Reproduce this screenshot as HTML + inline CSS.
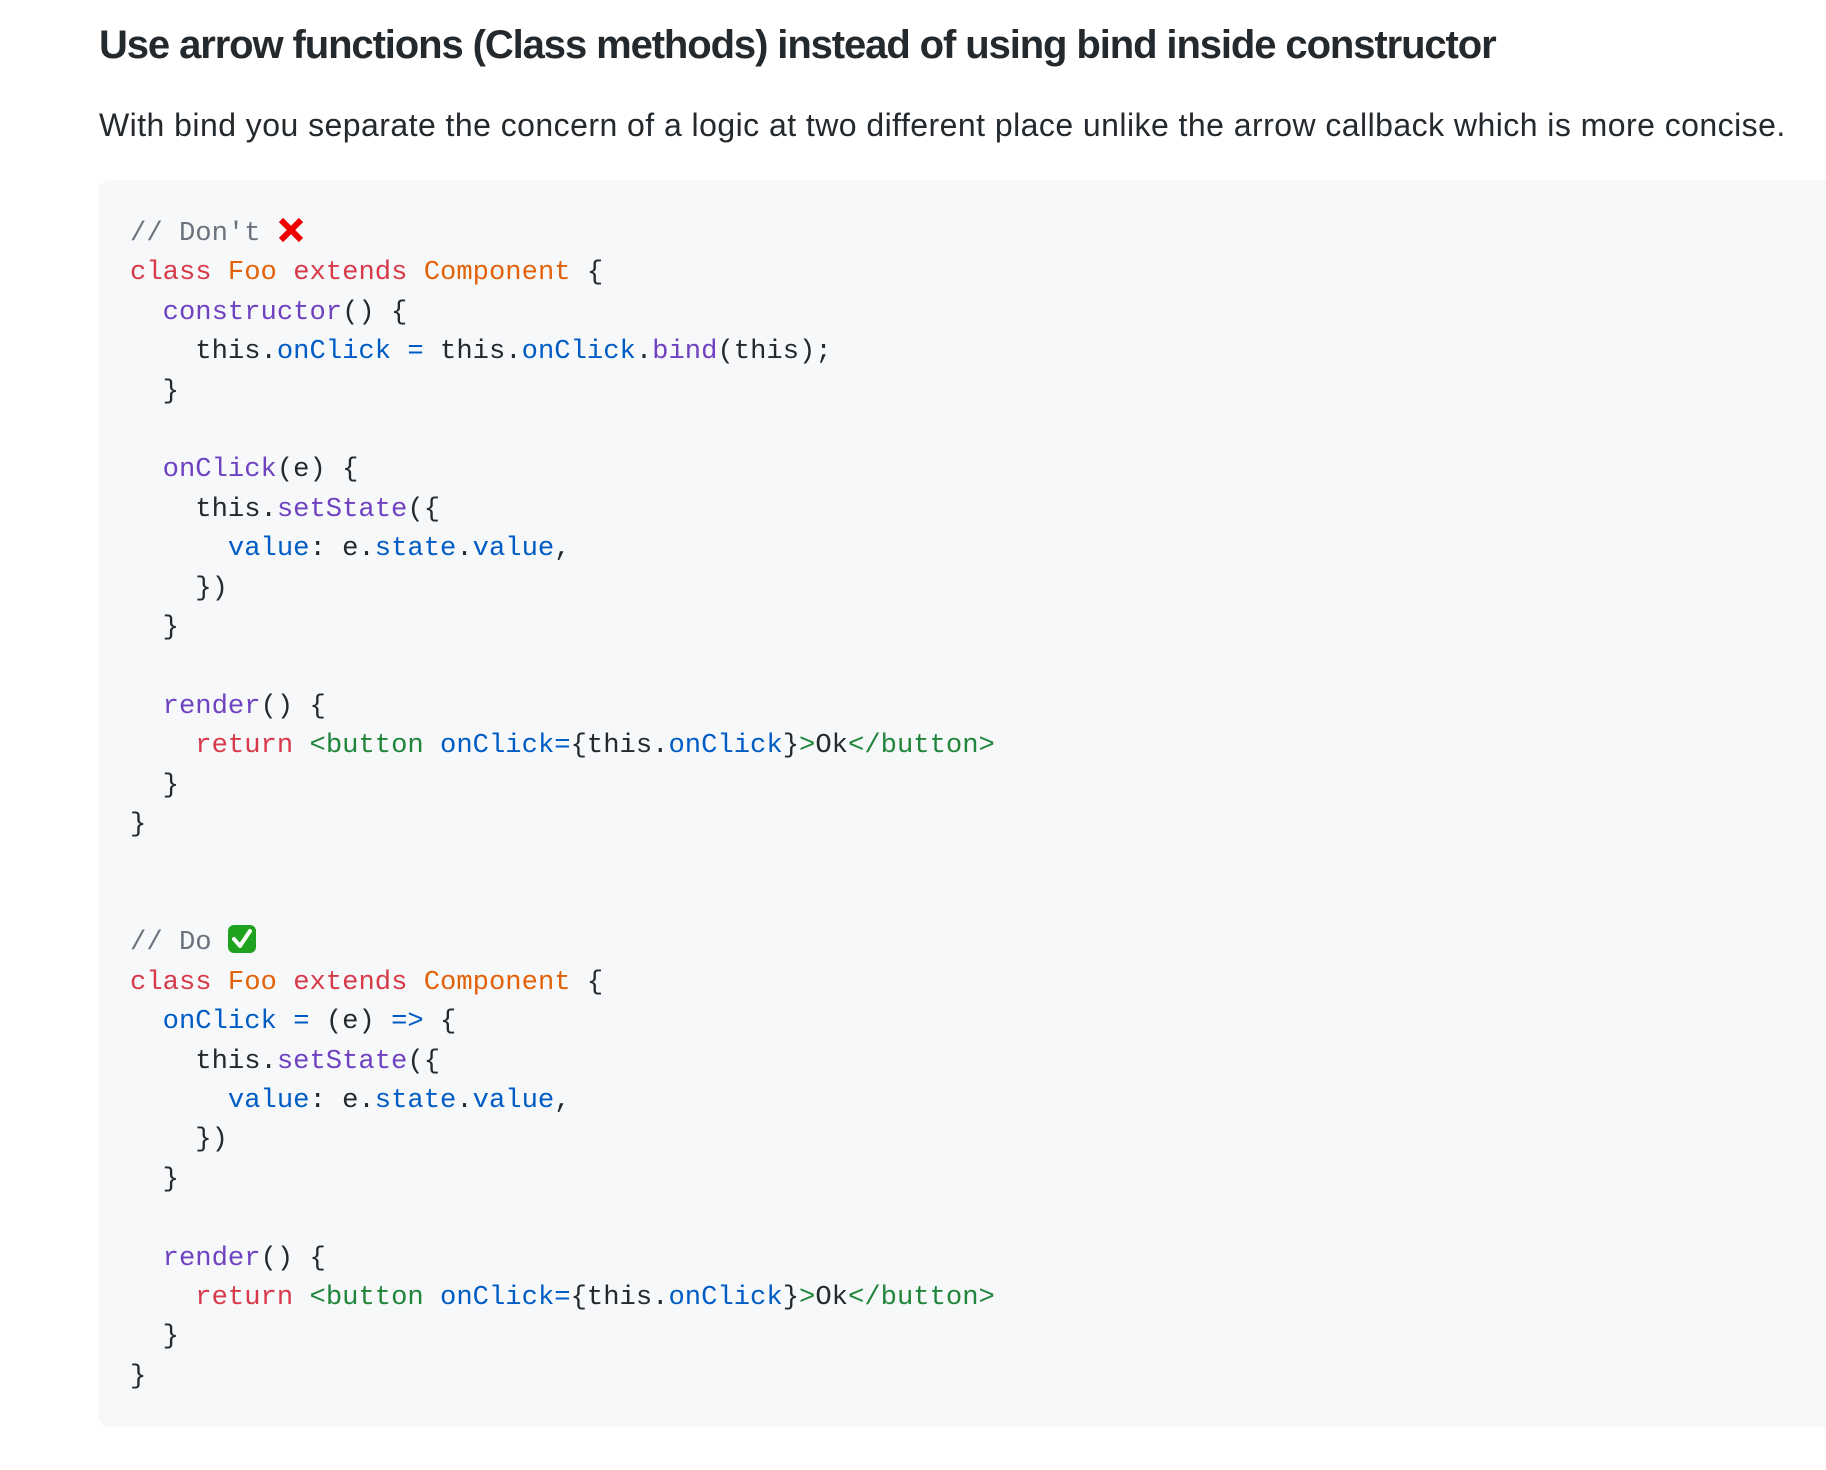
<!DOCTYPE html>
<html><head><meta charset="utf-8"><style>
html,body{margin:0;padding:0;background:#fff;width:1826px;height:1470px;overflow:hidden}
h3{position:absolute;left:99px;top:19px;margin:0;font:bold 40px/52px "Liberation Sans",sans-serif;color:#24292e;letter-spacing:-1.1px;white-space:nowrap}
p{position:absolute;left:99px;top:104px;margin:0;font:32px/42px "Liberation Sans",sans-serif;color:#24292e;letter-spacing:0.45px;white-space:nowrap}
pre{position:absolute;left:98px;top:180px;width:1760px;height:1247px;margin:0;box-sizing:border-box;padding:34px 32px 32px;background:#f6f8fa;border-radius:12px;font:27.2px/39.4px "Liberation Mono",monospace;color:#24292e}
.c{color:#6a737d}.k{color:#d73a49}.n{color:#e36209}.f{color:#6f42c1}.p{color:#005cc5}.t{color:#22863a}
svg{vertical-align:-4px}
</style></head><body>
<h3>Use arrow functions (Class methods) instead of using bind inside constructor</h3>
<p>With bind you separate the concern of a logic at two different place unlike the arrow callback which is more concise.</p>
<pre><span class="c">// Don't <svg width="28" height="28" viewBox="0 0 28 28"><path d="M4 4L24 24M24 4L4 24" stroke="#e00" stroke-width="6" stroke-linecap="butt"/></svg></span>
<span class="k">class</span> <span class="n">Foo</span> <span class="k">extends</span> <span class="n">Component</span> {
  <span class="f">constructor</span>() {
    this.<span class="p">onClick</span> <span class="p">=</span> this.<span class="p">onClick</span>.<span class="f">bind</span>(this);
  }

  <span class="f">onClick</span>(e) {
    this.<span class="f">setState</span>({
      <span class="p">value</span>: e.<span class="p">state</span>.<span class="p">value</span>,
    })
  }

  <span class="f">render</span>() {
    <span class="k">return</span> <span class="t">&lt;button</span> <span class="p">onClick=</span>{this.<span class="p">onClick</span>}<span class="t">&gt;</span>Ok<span class="t">&lt;/button&gt;</span>
  }
}


<span class="c">// Do <svg width="28" height="28" viewBox="0 0 28 28"><rect x="0" y="0" width="28" height="28" rx="6" fill="#1fa31f"/><path d="M6 14L12 21L22 6" stroke="#fff" stroke-width="4" fill="none" stroke-linecap="round" stroke-linejoin="round"/></svg></span>
<span class="k">class</span> <span class="n">Foo</span> <span class="k">extends</span> <span class="n">Component</span> {
  <span class="p">onClick</span> <span class="p">=</span> (e) <span class="p">=&gt;</span> {
    this.<span class="f">setState</span>({
      <span class="p">value</span>: e.<span class="p">state</span>.<span class="p">value</span>,
    })
  }

  <span class="f">render</span>() {
    <span class="k">return</span> <span class="t">&lt;button</span> <span class="p">onClick=</span>{this.<span class="p">onClick</span>}<span class="t">&gt;</span>Ok<span class="t">&lt;/button&gt;</span>
  }
}</pre>
</body></html>
